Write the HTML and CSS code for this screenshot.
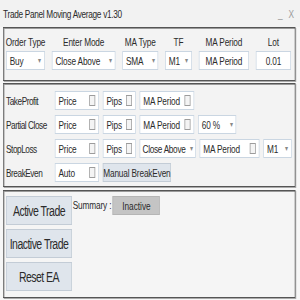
FILE: index.html
```html
<!DOCTYPE html>
<html lang="en">
<head>
    <meta charset="UTF-8">
    <title>Trade Panel Moving Average v1.30</title>
    <link rel="stylesheet" href="styles.css">
</head>
<body>
<div class="frame">
<div class="window">
    <div class="titlebar">
        <span class="title">Trade Panel Moving Average v1.30</span>
        <span class="winbtns"><span class="min">_</span><span class="close">X</span></span>
    </div>

    <!-- order settings -->
    <div class="panel order">
        <div class="col w-type"><label>Order Type</label><div class="select">Buy<i>▾</i></div></div>
        <div class="col w-mode"><label>Enter Mode</label><div class="select">Close Above<i>▾</i></div></div>
        <div class="col w-ma"><label>MA Type</label><div class="select">SMA<i>▾</i></div></div>
        <div class="col w-tf"><label>TF</label><div class="select">M1<i>▾</i></div></div>
        <div class="col w-per"><label>MA Period</label><div class="field center">MA Period</div></div>
        <div class="col w-lot"><label>Lot</label><div class="field center">0.01</div></div>
    </div>

    <!-- exits -->
    <div class="panel exits">
        <div class="row">
            <span class="rlabel">TakeProfit</span>
            <div class="field w-price">Price<b class="cb"></b></div>
            <div class="field w-pips">Pips<b class="cb"></b></div>
            <div class="field w-maper">MA Period<b class="cb"></b></div>
        </div>
        <div class="row">
            <span class="rlabel">Partial Close</span>
            <div class="field w-price">Price<b class="cb"></b></div>
            <div class="field w-pips">Pips<b class="cb"></b></div>
            <div class="field w-maper">MA Period<b class="cb"></b></div>
            <div class="select w-pct">60 %<i>▾</i></div>
        </div>
        <div class="row">
            <span class="rlabel">StopLoss</span>
            <div class="field w-price">Price<b class="cb"></b></div>
            <div class="field w-pips">Pips<b class="cb"></b></div>
            <div class="select w-close">Close Above<i>▾</i></div>
            <div class="field w-maper2">MA Period<b class="cb"></b></div>
            <div class="select w-tf2">M1<i>▾</i></div>
        </div>
        <div class="row">
            <span class="rlabel">BreakEven</span>
            <div class="field w-price">Auto<b class="cb"></b></div>
            <div class="btn small">Manual BreakEven</div>
        </div>
    </div>

    <!-- actions -->
    <div class="panel actions">
        <div class="buttons">
            <div class="btn big">Active Trade</div>
            <div class="btn big">Inactive Trade</div>
            <div class="btn big">Reset EA</div>
        </div>
        <div class="summary">
            <span>Summary :</span>
            <span class="status">Inactive</span>
        </div>
    </div>
</div>
</div>
</body>
</html>
```

FILE: styles.css
```css
/* the panel is laid out 400px wide and squeezed to 300px, like the narrow MT4 look */
html, body {
    overflow: hidden;
}
body {
    margin: 0;
    background: #f7f7f7;
    font-family: "Liberation Sans", Arial, sans-serif;
    font-size: 11px;
    color: #2b2b2b;
}
.frame {
    width: 300px;
    height: 300px;
    overflow: hidden;
}
.window {
    width: 400px;
    height: 300px;
    transform: scaleX(0.75);
    transform-origin: 0 0;
}
.titlebar {
    height: 27px;
    display: flex;
    align-items: center;
    justify-content: space-between;
    padding: 0 8px 0 4px;
    box-sizing: border-box;
    background: #f2f2f2;
}
.title {
    letter-spacing: -0.4px;
}
.winbtns {
    color: #9a9a9a;
    font-size: 11px;
    display: flex;
    gap: 8px;
}
.panel {
    margin-left: 4px;
    width: 390px;
    box-sizing: border-box;
    border: 1px solid #555;
    border-width: 1px 1px 1px 1.5px;
    box-shadow: inset 1px 1px 0 #9a9a9a, 1px 1px 0 #aaa;
    background: #f3f3f3;
}

/* order panel */
.order {
    height: 54px;
    display: flex;
    gap: 9px;
    padding: 8px 0 0 3px;
}
.col {
    display: flex;
    flex-direction: column;
    align-items: center;
}
.col label {
    height: 15px;
    white-space: nowrap;
    letter-spacing: -0.2px;
}
.w-type { width: 52px; }
.w-mode { width: 85px; }
.w-ma { width: 48px; }
.w-tf { width: 36px; }
.w-per { width: 67px; }
.w-lot { width: 47px; }
.col .select, .col .field {
    width: 100%;
    height: 19px;
}

.select, .field {
    box-sizing: border-box;
    background: #fff;
    border: 1px solid #cad6e2;
    border-width: 1px 1.5px;
    display: flex;
    align-items: center;
    padding: 0 4px;
    white-space: nowrap;
    overflow: hidden;
    letter-spacing: -0.2px;
}
.select i {
    font-style: normal;
    font-size: 8px;
    color: #888;
    margin-left: auto;
    padding-left: 2px;
}
.field.center {
    justify-content: center;
}
.cb {
    margin-left: auto;
    width: 6px;
    height: 9px;
    border: 1px solid #9c9c9c;
    border-width: 1px 1.5px;
    background: #f4f4f4;
}

/* exits panel */
.exits {
    margin-top: 2px;
    height: 104px;
    padding: 7px 0 0 3px;
    display: flex;
    flex-direction: column;
    gap: 5px;
}
.row {
    display: flex;
    align-items: center;
    gap: 5px;
    height: 19px;
}
.row .field, .row .select {
    height: 19px;
}
.rlabel {
    width: 60px;
    letter-spacing: -0.6px;
    white-space: nowrap;
}
.w-price { width: 59px; }
.w-pips { width: 44px; }
.w-maper { width: 73px; }
.w-pct { width: 51px; }
.w-close { width: 75px; padding: 0 3px; letter-spacing: -0.4px; }
.w-maper2 { width: 80px; }
.w-tf2 { width: 38px; }

.btn {
    box-sizing: border-box;
    background: #dfe5ec;
    border: 1px solid #c3ccd6;
    border-width: 1px 1.5px;
    display: flex;
    align-items: center;
    justify-content: center;
    white-space: nowrap;
    letter-spacing: -0.2px;
}
.btn.small {
    width: 91px;
    height: 19px;
}

/* actions panel */
.actions {
    margin-top: 3px;
    height: 108px;
    display: flex;
    padding: 5px 0 0 3px;
    background: #f5f5f5;
}
.buttons {
    display: flex;
    flex-direction: column;
    gap: 4px;
}
.btn.big {
    width: 88px;
    height: 29px;
    font-size: 14px;
    letter-spacing: -0.7px;
}
.summary {
    display: flex;
    align-items: flex-start;
    gap: 2px;
    padding-left: 1px;
}
.summary span:first-child {
    padding-top: 3px;
    letter-spacing: -0.2px;
}
.status {
    width: 63px;
    height: 19px;
    box-sizing: border-box;
    background: #c4c4c4;
    border: 1px solid #b5b5b5;
    display: flex;
    align-items: center;
    justify-content: center;
}
```
